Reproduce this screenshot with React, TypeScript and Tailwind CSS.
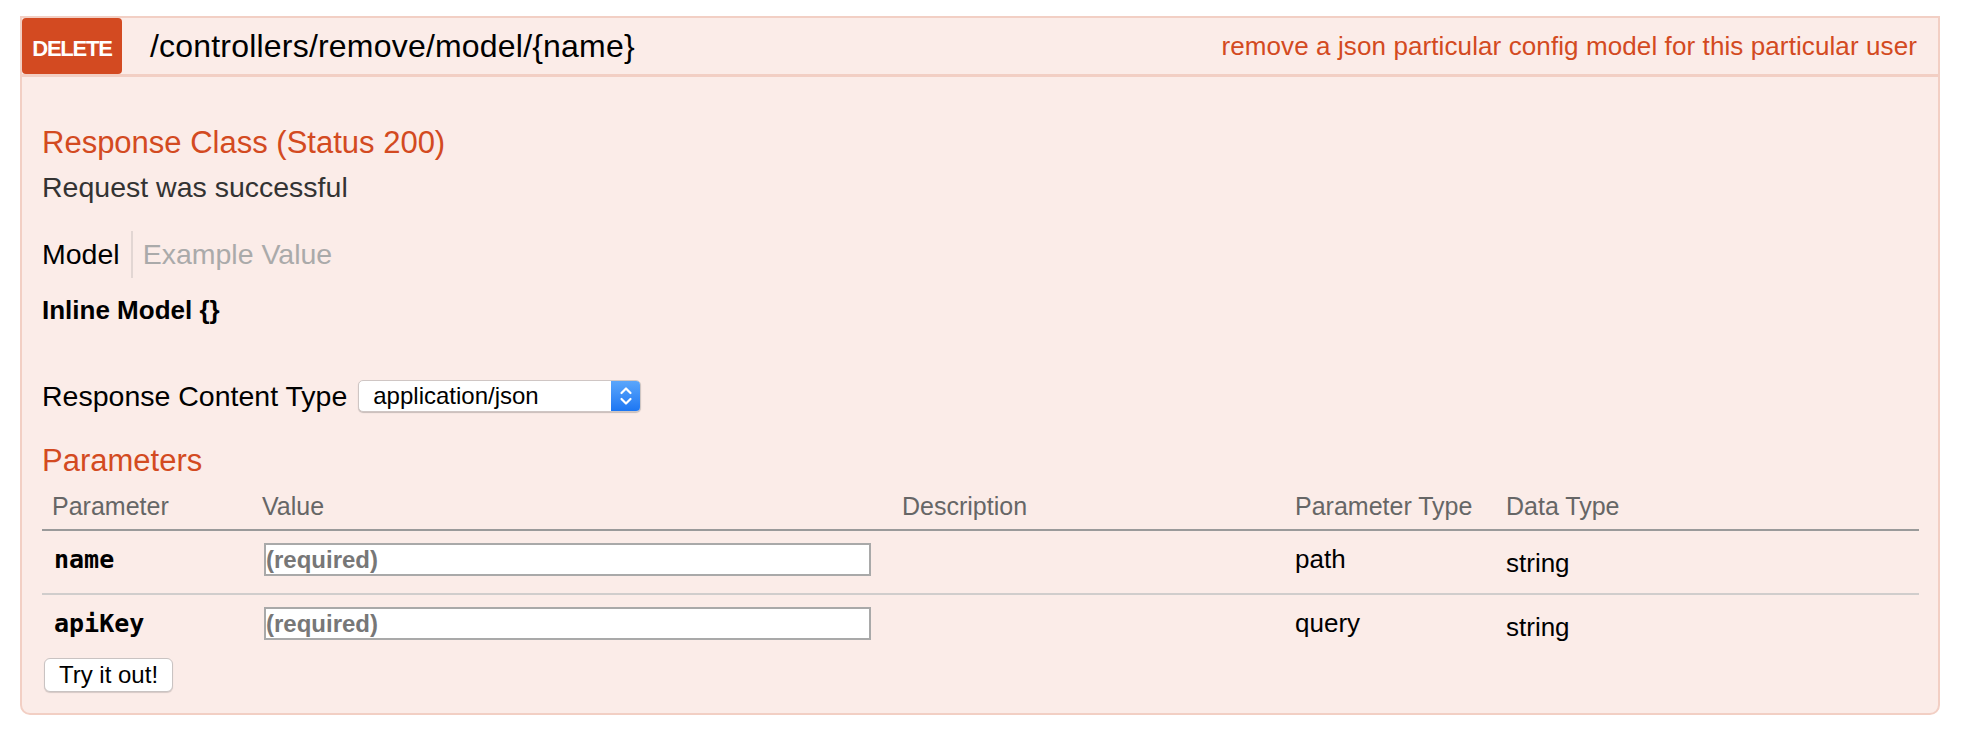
import React from 'react';

const params = [
    { name: 'name', type: 'path', dataType: 'string' },
    { name: 'apiKey', type: 'query', dataType: 'string' },
];

function SelectArrows() {
    return (
        <svg width="14" height="22" viewBox="0 0 14 22" fill="none" stroke="white" strokeWidth="2.2" strokeLinecap="round" strokeLinejoin="round">
            <path d="M2.5 8 L7 3.5 L11.5 8" />
            <path d="M2.5 14 L7 18.5 L11.5 14" />
        </svg>
    );
}

export default function App() {
    return (
        <div className="w-[1962px] h-[741px] bg-white pt-4 pl-5" style={{ fontFamily: '"Liberation Sans", Arial, sans-serif' }}>
            <div className="w-[1920px] border-2 border-[#f2cfc4] rounded-b-[10px] bg-[#fbece8]">
                {/* Heading bar */}
                <div className="flex items-center h-[59px] border-b-[3px] border-[#f2cfc4] pr-[21px]">
                    <span className="flex items-center justify-center self-stretch w-[100px] bg-[#d34a21] rounded-[4px] text-white text-[22px] font-bold pt-[5px] tracking-[-1.2px]">
                        DELETE
                    </span>
                    <span className="ml-[28px] text-[32px] text-black tracking-[0.2px]">/controllers/remove/model/{'{name}'}</span>
                    <span className="ml-auto text-[26px] text-[#d34a21] tracking-[0.1px]">
                        remove a json particular config model for this particular user
                    </span>
                </div>

                {/* Content */}
                <div className="pt-[48px] pl-[20px] pr-[19px] pb-[21px]">
                    <h4 className="text-[31px] leading-[36px] text-[#d34a21]">Response Class (Status 200)</h4>
                    <p className="mt-[9px] text-[28.5px] leading-[34px] text-[#333]">Request was successful</p>

                    <div className="mt-[27px] flex items-center h-[47px] text-[28.5px]">
                        <span className="pr-[11px] text-black">Model</span>
                        <span className="self-stretch border-l-2 border-[#e2d6d3]" />
                        <span className="pl-[10px] text-[#aaa]">Example Value</span>
                    </div>

                    <div className="mt-[17px] text-[26px] leading-[30px] font-bold text-black">Inline Model {'{}'}</div>

                    <div className="mt-[55px] flex items-center h-[32px]">
                        <span className="text-[28.5px] text-black">Response Content Type</span>
                        <div className="ml-[11px] flex w-[283px] h-[32px] rounded-[5px] bg-white border border-[#cfc6c4] shadow-[0_1px_1px_rgba(0,0,0,0.2)] overflow-hidden">
                            <span className="flex-1 pl-[14px] text-[24px] leading-[30px] text-black">application/json</span>
                            <span className="w-[29px] flex items-center justify-center bg-gradient-to-b from-[#5aa6fb] to-[#1b76f3]">
                                <SelectArrows />
                            </span>
                        </div>
                    </div>

                    <h4 className="mt-[31px] text-[31px] leading-[36px] text-[#d34a21]">Parameters</h4>

                    {/* Parameter table */}
                    <div className="grid grid-cols-[210px_640px_393px_211px_421px] border-b-2 border-[#9a9a9a] text-[25px] leading-[30px] text-[#666] pt-[12px] pb-[8px]">
                        <span className="pl-[10px]">Parameter</span>
                        <span className="pl-[10px]">Value</span>
                        <span className="pl-[10px]">Description</span>
                        <span className="pl-[10px]">Parameter Type</span>
                        <span className="pl-[10px]">Data Type</span>
                    </div>
                    {params.map((p, i) => (
                        <div
                            key={p.name}
                            className={`grid grid-cols-[210px_640px_393px_211px_421px] pt-[12px] ${i === 0 ? 'h-[64px] border-b-2 border-[#d0cdcc]' : 'h-[62px]'}`}
                        >
                            <span className="pl-[12px] pt-[2px] text-[25px] leading-[30px] font-bold text-black" style={{ fontFamily: '"DejaVu Sans Mono", monospace' }}>
                                {p.name}
                            </span>
                            <div className="pl-[12px]">
                                <input
                                    readOnly
                                    placeholder="(required)"
                                    className="w-[607px] h-[33px] bg-white border-2 border-[#a9a9a9] px-0 text-[24px] font-bold placeholder:text-[#777] outline-none"
                                />
                            </div>
                            <span />
                            <span className="pl-[10px] pt-[1px] text-[26px] leading-[30px] text-black">{p.type}</span>
                            <span className="pl-[10px] pt-[5px] text-[26px] leading-[30px] text-black">{p.dataType}</span>
                        </div>
                    ))}

                    <button className="mt-[1px] ml-[2px] w-[129px] h-[34px] bg-white border border-[#c9c3c2] rounded-[6px] shadow-[0_1px_1px_rgba(0,0,0,0.15)] text-[24px] leading-[32px] text-black">
                        Try it out!
                    </button>
                </div>
            </div>
        </div>
    );
}
